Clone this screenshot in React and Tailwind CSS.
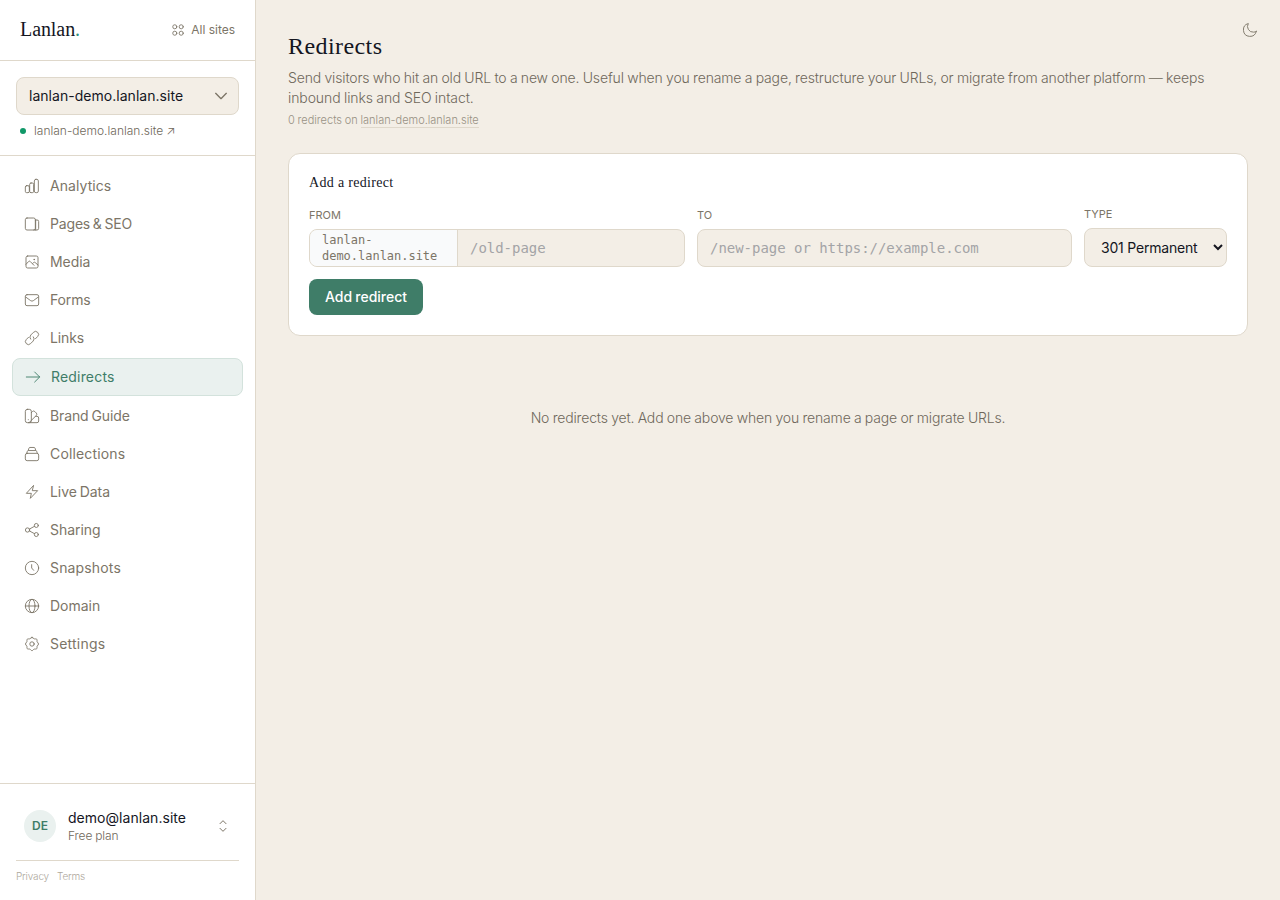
import React from "react";

function Icon({ className = "size-4", stroke = 1.35, children }) {
  return (
    <svg
      className={`shrink-0 ${className}`}
      viewBox="0 0 24 24"
      fill="none"
      stroke="currentColor"
      strokeWidth={stroke}
      strokeLinecap="round"
      strokeLinejoin="round"
    >
      {children}
    </svg>
  );
}

const NAV = [
  {
    label: "Analytics",
    text: "tracking-[0.07px]",
    icon: (
      <>
        <rect x="2" y="11.5" width="6" height="10.5" rx="2" />
        <rect x="8.5" y="7.5" width="6" height="14.5" rx="2" />
        <rect x="15.5" y="2" width="6" height="20" rx="2.4" />
      </>
    ),
  },
  {
    label: "Pages & SEO",
    text: "tracking-[-0.17px]",
    icon: (
      <>
        <rect x="2" y="3" width="15" height="18" rx="2.5" />
        <path d="M17 6h2.5A2.3 2.3 0 0 1 22 8.300V18.500A2.500 2.500 0 0 1 19.500 21H14.500M17.500 6V21" />
      </>
    ),
  },
  {
    label: "Media",
    text: "tracking-[-0.05px]",
    icon: (
      <>
        <rect x="3" y="3" width="18" height="18" rx="2.5" />
        <path d="M3 15.500l4-4.300a1.600 1.600 0 0 1 2.300 0L15 17M13 14.200l1.500-1.400a1.600 1.600 0 0 1 2.200 0L21 16.500" />
        <circle cx="15.200" cy="8.300" r="0.600" />
      </>
    ),
  },
  {
    label: "Forms",
    text: "tracking-[-0.15px]",
    icon: (
      <>
        <rect x="2" y="4" width="20" height="16.500" rx="2.500" />
        <path d="M2.500 7.500l7.500 5.500a3.400 3.400 0 0 0 4 0l7.500-5.500" />
      </>
    ),
  },
  {
    label: "Links",
    text: "tracking-[-0.15px]",
    icon: (
      <>
        <path d="M10 13.800a4.700 4.700 0 0 1 .3-6.400l3.900-3.900a4.450 4.450 0 0 1 6.300 6.300l-3.300 3.300" />
        <path d="M14 10.200a4.700 4.700 0 0 1-.3 6.400l-3.900 3.900a4.450 4.450 0 0 1-6.300-6.300l3.300-3.300" />
      </>
    ),
  },
  {
    label: "Redirects",
    text: "tracking-[0.18px]",
    active: true,
    icon: <path d="M2 12h20M14.500 4.500L22 12l-7.500 7.500" />,
  },
  {
    label: "Brand Guide",
    text: "tracking-[-0.11px]",
    icon: (
      <>
        <rect x="2" y="2" width="9" height="20" rx="3" />
        <path d="M11 7l1.700-1.700a2.500 2.500 0 0 1 3.500 0l2.300 2.300a2.500 2.500 0 0 1 0 3.500L8.600 21" />
        <path d="M17.500 12.500h2A2.500 2.500 0 0 1 22 15v4.500a2.500 2.500 0 0 1-2.500 2.500H6.500M6.500 17.500v.100" />
      </>
    ),
  },
  {
    label: "Collections",
    text: "tracking-[0.15px]",
    icon: (
      <>
        <rect x="2" y="11" width="20" height="11" rx="2.700" />
        <path d="M4 11l1-3a1.700 1.700 0 0 1 1.600-1.200h10.800A1.700 1.700 0 0 1 19 8l1 3M6.500 6.500L7.300 3.500A1.800 1.800 0 0 1 9 2.200h6a1.800 1.800 0 0 1 1.700 1.300l.8 3" />
      </>
    ),
  },
  {
    label: "Live Data",
    text: "tracking-[-0.05px]",
    icon: <path d="M14 2.500L3.500 14H11l-1.500 7.500L20.500 10H13z" />,
  },
  {
    label: "Sharing",
    text: "tracking-[-0.05px]",
    icon: (
      <>
        <circle cx="5.300" cy="12" r="3.200" />
        <circle cx="18.500" cy="5.200" r="3" />
        <circle cx="18.500" cy="18.800" r="3" />
        <path d="M8.300 10.500l7.400-4M8.300 13.500l7.400 4" />
      </>
    ),
  },
  {
    label: "Snapshots",
    text: "tracking-[0.15px]",
    icon: (
      <>
        <circle cx="12" cy="12" r="10" />
        <path d="M11.500 7v5l3 3.500" />
      </>
    ),
  },
  {
    label: "Domain",
    text: "tracking-[-0.02px]",
    icon: (
      <>
        <circle cx="12" cy="12" r="10" />
        <ellipse cx="12" cy="12" rx="4.500" ry="10" />
        <path d="M2 12h20" />
      </>
    ),
  },
  {
    label: "Settings",
    text: "tracking-[0.22px]",
    icon: (
      <>
        <circle cx="12" cy="12" r="3.300" />
        <path d="M12 2c1.400 0 1.900 1.700 3.200 2.200s2.900-.4 3.900.6 .1 2.500.6 3.900 2.200 1.900 2.200 3.300-1.700 1.900-2.200 3.200.4 2.900-.6 3.900-2.500.1-3.900.6S13.400 22 12 22s-1.900-1.700-3.200-2.300-2.900.4-3.900-.6-.1-2.500-.6-3.900S2.100 13.400 2.100 12s1.700-1.900 2.200-3.300-.4-2.900.6-3.900 2.500-.1 3.900-.6S10.600 2 12 2z" />
      </>
    ),
  },
];

function Sidebar() {
  return (
    <aside className="flex w-64 shrink-0 flex-col border-r border-[#dfd8cb] bg-white">
      <div className="flex h-[61px] items-center justify-between border-b border-[#dfd8cb] px-5">
        <div className="pb-[3px] font-['Liberation_Serif',serif] text-[20px] tracking-[-0.08px] text-[#14161f]">
          Lanlan<span className="text-[#2f8f7d]">.</span>
        </div>
        <div className="flex items-center gap-1.5 text-xs tracking-[-0.02px] text-[#7c7567]">
          <Icon className="size-3.5" stroke={1.5}>
            <circle cx="6.500" cy="6.500" r="3.500" />
            <circle cx="17.500" cy="6.500" r="3.500" />
            <circle cx="6.500" cy="17.500" r="3.500" />
            <circle cx="17.500" cy="17.500" r="3.500" />
          </Icon>
          All sites
        </div>
      </div>

      <div className="h-[95px] border-b border-[#dfd8cb] px-4 pt-4">
        <button className="flex h-[38px] w-full items-center justify-between rounded-lg border border-[#dfd8cb] bg-[#f3eee6] pr-[9px] pl-3 text-sm tracking-[0.03px] text-[#14161f]">
          lanlan-demo.lanlan.site
          <Icon className="size-4 text-[#7c7567]" stroke={2}>
            <path d="M4 8l8 8 8-8" />
          </Icon>
        </button>
        <a className="mt-2 flex items-center px-1 text-xs font-light text-[#6f685b]">
          <span className="mr-2 size-1.5 rounded-full bg-[#109868]" />
          lanlan-demo.lanlan.site
          <span className="ml-[3px] text-xs">↗</span>
        </a>
      </div>

      <nav className="flex flex-1 flex-col gap-0.5 p-3">
        {NAV.map((item) => (
          <a
            key={item.label}
            className={`flex items-center gap-2.5 rounded-lg px-3 text-sm [word-spacing:-1px] ${item.text} ${
              item.active
                ? "h-[38px] border border-[#d3e2dc] bg-[#eaf1ef] text-[#3f7d68]"
                : "h-9 text-[#7c7567]"
            }`}
          >
            <Icon>{item.icon}</Icon>
            {item.label}
          </a>
        ))}
      </nav>

      <div className="h-[117px] border-t border-[#dfd8cb] px-4">
        <div className="flex h-[77px] items-center gap-3 border-b border-[#dfd8cb] px-2 pt-2">
          <div className="flex size-8 items-center justify-center rounded-full bg-[#eaf1ef] text-xs font-semibold text-[#3f7d68]">
            DE
          </div>
          <div className="flex-1 pt-0.5">
            <div className="text-sm leading-[18px] tracking-[0.04px] text-[#14161f]">
              demo@lanlan.site
            </div>
            <div className="text-xs leading-[18px] font-light tracking-[-0.08px] text-[#6f685b] [word-spacing:-0.5px]">
              Free plan
            </div>
          </div>
          <Icon className="size-4 text-[#7c7567]" stroke={1.5}>
            <path d="M7.500 8.500l4.500-4.500 4.500 4.500M7.500 15.500l4.500 4.500 4.500-4.500" />
          </Icon>
        </div>
        <div className="mt-[7px] flex gap-2 text-[10px] leading-4 font-light tracking-[-0.18px] text-[#aea89c]">
          <span className="w-[33px]">Privacy</span>
          <span>Terms</span>
        </div>
      </div>
    </aside>
  );
}

const LABEL = "mb-1.5 block text-[11px] leading-4 text-[#7c7567]";

export default function App() {
  return (
    <div className="flex h-[900px] w-[1280px] overflow-hidden bg-[#f3eee6] font-['Inter',sans-serif]">
      <Sidebar />
      <main className="relative flex-1 px-8 pt-8">
        <button className="absolute top-[22px] right-[22px] text-[#7c7567]">
          <Icon stroke={1.4}>
            <path d="M21.500 14.100c-1.200.700-2.500 1.100-4 1.100A8.500 8.500 0 0 1 9.500 2.300 9.800 9.800 0 1 0 21.500 14.100z" />
          </Icon>
        </button>

        <h1 className="h-8 font-['Liberation_Serif',serif] text-[24px] leading-[29px] tracking-[0.42px] text-[#14161f]">
          Redirects
        </h1>
        <p className="mt-1 text-sm leading-5 font-light tracking-[-0.145px] whitespace-nowrap text-[#6f685b] [word-spacing:-0.4px]">
          Send visitors who hit an old URL to a new one. Useful when you rename a page, restructure
          your URLs, or migrate from another platform — keeps
          <br />
          <span className="tracking-[-0.09px]">inbound links and SEO intact.</span>
        </p>
        <p className="mt-1 text-[11px] leading-4 font-light tracking-[-0.01px] text-[#989184] [word-spacing:-0.3px]">
          0 redirects on{" "}
          <span className="border-b border-[#dfd8cb]">lanlan-demo.lanlan.site</span>
        </p>

        <section className="mt-[25px] rounded-xl border border-[#dfd8cb] bg-white p-5">
          <h2 className="h-8 font-['Liberation_Serif',serif] text-sm leading-[17px] tracking-[0.32px] text-[#14161f]">
            Add a redirect
          </h2>
          <div className="grid grid-cols-[376px_375px_143px] items-end gap-3">
            <div>
              <label className={LABEL}>FROM</label>
              <div className="flex h-[38px] overflow-hidden rounded-lg border border-[#dfd8cb] bg-[#f3eee6]">
                <div className="flex w-[148px] shrink-0 items-center border-r border-[#dfd8cb] bg-[#f9fafb] px-3 font-['DejaVu_Sans_Mono',monospace] text-xs leading-4 tracking-[-0.02px] text-[#7c7567]">
                  <span>
                    lanlan-
                    <br />
                    demo.lanlan.site
                  </span>
                </div>
                <input
                  className="min-w-0 flex-1 px-3 font-['DejaVu_Sans_Mono',monospace] text-sm tracking-[-0.03px] placeholder:text-[#a3a4a6]"
                  placeholder="/old-page"
                />
              </div>
            </div>
            <div>
              <label className={LABEL}>TO</label>
              <input
                className="block h-[38px] w-full rounded-lg border border-[#dfd8cb] bg-[#f3eee6] px-3 font-['DejaVu_Sans_Mono',monospace] text-sm tracking-[-0.03px] placeholder:text-[#a3a4a6]"
                placeholder="/new-page or https://example.com"
              />
            </div>
            <div>
              <label className={LABEL}>TYPE</label>
              <select className="block h-[39px] w-full rounded-lg border border-[#dfd8cb] bg-[#f3eee6] px-3 text-sm tracking-[-0.2px] text-[#14161f]">
                <option>301 Permanent</option>
              </select>
            </div>
          </div>
          <button className="mt-3 block h-9 w-[114px] rounded-lg bg-[#3f7d68] text-sm font-medium text-white [word-spacing:-0.5px]">
            Add redirect
          </button>
        </section>

        <p className="mt-[72px] text-center text-sm leading-5 font-light tracking-[-0.16px] text-[#6f685b] [word-spacing:-0.4px]">
          No redirects yet. Add one above when you rename a page or migrate URLs.
        </p>
      </main>
    </div>
  );
}
